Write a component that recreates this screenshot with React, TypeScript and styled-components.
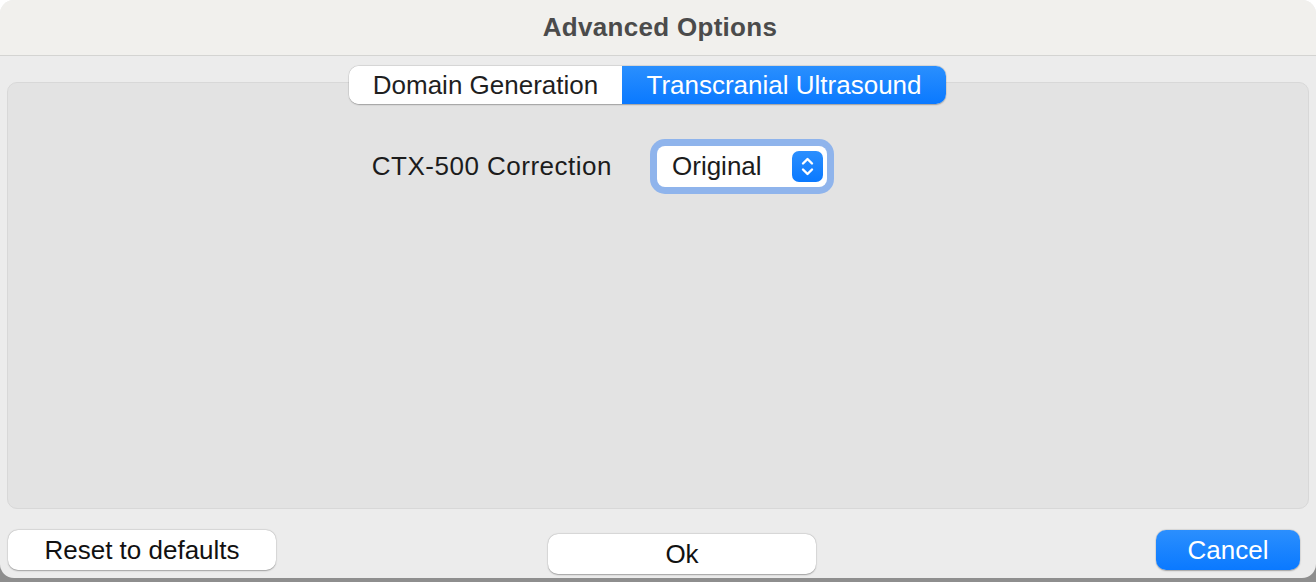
import React from "react";
import styled, { createGlobalStyle } from "styled-components";

const Global = createGlobalStyle`
  html, body { margin: 0; padding: 0; }
  body {
    width: 1316px;
    height: 582px;
    overflow: hidden;
    background: linear-gradient(to bottom, #ffffff 0%, #ffffff 50%, #8e8e8e 50%, #8e8e8e 100%);
    font-family: "Liberation Sans", Arial, sans-serif;
  }
`;

const Window = styled.div`
  width: 1316px;
  height: 578px;
  background: #ececec;
  border-radius: 14px;
  overflow: hidden;
  display: flex;
  flex-direction: column;
`;

const TitleBar = styled.div`
  height: 56px;
  flex: none;
  background: #f1f0ed;
  border-bottom: 1px solid #d4d4d2;
  display: flex;
  align-items: center;
  justify-content: center;
  padding-left: 4px;
  box-sizing: border-box;
  font-size: 26px;
  font-weight: 700;
  letter-spacing: 0.3px;
  color: #4b4b4b;
`;

const Content = styled.div`
  flex: 1;
  display: flex;
  flex-direction: column;
  padding: 10px 7px 0 7px;
`;

const TabBar = styled.div`
  display: flex;
  justify-content: center;
  padding-right: 21px;
  margin-bottom: -22px;
  position: relative;
  z-index: 1;
`;

const Segmented = styled.div`
  display: flex;
  height: 38px;
  border-radius: 10px;
  overflow: hidden;
  background: #ffffff;
  box-shadow: 0 0.5px 1.5px rgba(0, 0, 0, 0.28), 0 0 0 0.5px rgba(0, 0, 0, 0.08);
`;

const Segment = styled.div<{ $active?: boolean; $w: number }>`
  width: ${(p) => p.$w}px;
  display: flex;
  align-items: center;
  justify-content: center;
  font-size: 26px;
  color: ${(p) => (p.$active ? "#ffffff" : "#1f1f1f")};
  background: ${(p) =>
    p.$active ? "linear-gradient(to bottom, #2a8ffe, #0a79ff)" : "#ffffff"};
`;

const Panel = styled.div`
  height: 427px;
  box-sizing: border-box;
  background: #e3e3e3;
  border: 1px solid #d8d8d8;
  border-radius: 10px;
  padding-top: 63px;
`;

const Row = styled.div`
  display: flex;
  align-items: center;
  padding-left: 360px;
  gap: 45px;
`;

const Label = styled.div`
  font-size: 26px;
  color: #1c1c1c;
  width: 244px;
  text-align: right;
  letter-spacing: 0.5px;
`;

const Popup = styled.div`
  width: 170px;
  height: 41px;
  box-sizing: border-box;
  background: #ffffff;
  border-radius: 8px;
  box-shadow: 0 0 0 7px #8fb4ec, 0 0.5px 1.5px rgba(0, 0, 0, 0.3);
  display: flex;
  align-items: center;
  justify-content: space-between;
  padding: 0 4px 0 15px;
  font-size: 26px;
  color: #1c1c1c;
`;

const Stepper = styled.div`
  width: 31px;
  height: 31px;
  border-radius: 7px;
  background: linear-gradient(to bottom, #2b8ffe, #0a79ff);
  display: flex;
  align-items: center;
  justify-content: center;
`;

const Footer = styled.div`
  flex: 1;
  display: flex;
  align-items: flex-start;
  padding: 21px 9px 0 1px;
`;

const Button = styled.div<{ $primary?: boolean; $w: number; $offset?: number }>`
  width: ${(p) => p.$w}px;
  height: 40px;
  margin-top: ${(p) => p.$offset ?? 0}px;
  box-sizing: border-box;
  border-radius: 10px;
  display: flex;
  align-items: center;
  justify-content: center;
  font-size: 26px;
  color: ${(p) => (p.$primary ? "#ffffff" : "#111111")};
  background: ${(p) =>
    p.$primary ? "linear-gradient(to bottom, #2b8ffe, #0a79ff)" : "#ffffff"};
  box-shadow: 0 0.5px 1.5px rgba(0, 0, 0, 0.3), 0 0 0 0.5px rgba(0, 0, 0, 0.06);
`;

const Spacer = styled.div<{ $w?: number }>`
  ${(p) => (p.$w ? `width: ${p.$w}px; flex: none;` : "flex: 1;")}
`;

export default function App() {
  return (
    <>
      <Global />
      <Window>
        <TitleBar>Advanced Options</TitleBar>
        <Content>
          <TabBar>
            <Segmented>
              <Segment $w={273}>Domain Generation</Segment>
              <Segment $w={324} $active>
                Transcranial Ultrasound
              </Segment>
            </Segmented>
          </TabBar>
          <Panel>
            <Row>
              <Label>CTX-500 Correction</Label>
              <Popup>
                <span>Original</span>
                <Stepper>
                  <svg width="31" height="31" viewBox="0 0 31 31">
                    <path
                      d="M11 12.5 L15.5 8 L20 12.5"
                      fill="none"
                      stroke="#fff"
                      strokeWidth="2.4"
                      strokeLinecap="round"
                      strokeLinejoin="round"
                    />
                    <path
                      d="M11 18.5 L15.5 23 L20 18.5"
                      fill="none"
                      stroke="#fff"
                      strokeWidth="2.4"
                      strokeLinecap="round"
                      strokeLinejoin="round"
                    />
                  </svg>
                </Stepper>
              </Popup>
            </Row>
          </Panel>
          <Footer>
            <Button $w={268}>Reset to defaults</Button>
            <Spacer $w={272} />
            <Button $w={268} $offset={4}>
              Ok
            </Button>
            <Spacer />
            <Button $w={144} $primary>
              Cancel
            </Button>
          </Footer>
        </Content>
      </Window>
    </>
  );
}
